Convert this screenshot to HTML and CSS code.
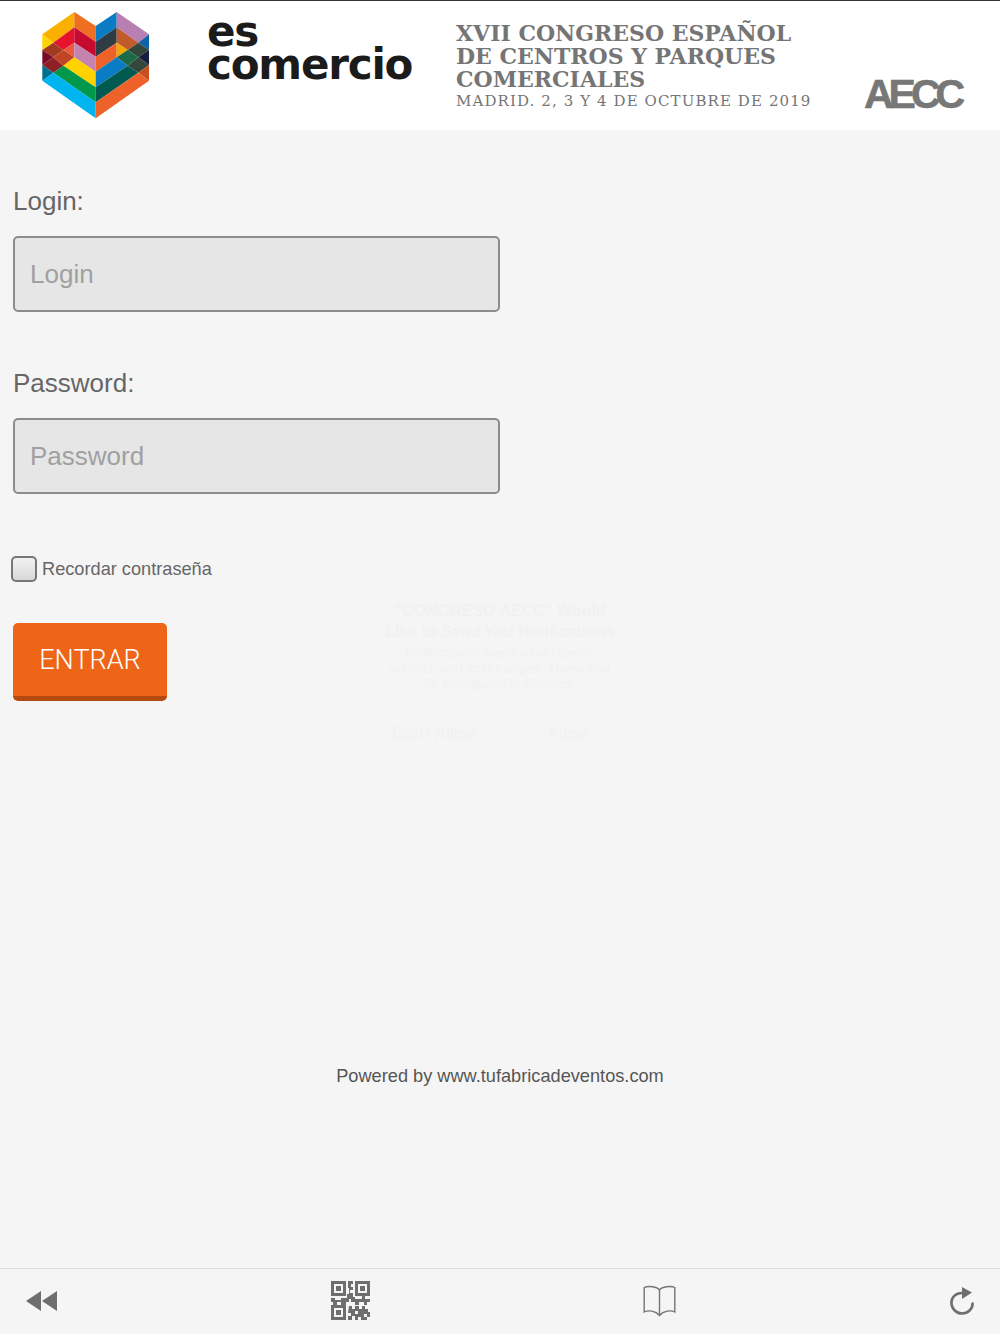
FILE: index.html
```html
<!DOCTYPE html>
<html lang="en">
<head>
  <meta charset="UTF-8" />
  <title>Congreso AECC</title>
  <link rel="stylesheet" href="styles.css">
</head>
<body>
  <header class="header">
    <svg class="logo" viewBox="0 0 420 390" width="140" height="130">
      <polygon fill="#fbb000" points="52,103 148,36 148,82 85,128"/>
      <polygon fill="#ffd400" points="52,103 85,128 52,150"/>
      <polygon fill="#ee6f20" points="148,36 212,78 212,125 148,82"/>
      <polygon fill="#e5142c" points="85,128 148,82 148,128 115,150"/>
      <polygon fill="#c70a30" points="148,82 212,125 212,170 148,128"/>
      <polygon fill="#a23a22" points="52,150 85,128 115,150 85,172"/>
      <polygon fill="#ea5a3c" points="115,150 148,128 148,172"/>
      <polygon fill="#7a0c28" points="52,150 85,172 52,195"/>
      <polygon fill="#8e2027" points="85,172 115,197 85,218 52,195"/>
      <polygon fill="#c04525" points="85,172 115,150 148,172 115,197"/>
      <polygon fill="#c583b0" points="148,128 212,170 212,215 148,172"/>
      <polygon fill="#ffd200" points="115,197 148,172 212,215 212,262"/>
      <polygon fill="#00984a" points="85,218 115,197 212,262 212,307"/>
      <polygon fill="#006f8f" points="52,195 85,218 52,242"/>
      <polygon fill="#00b5ef" points="52,242 85,218 212,307 212,355"/>
      <polygon fill="#0a7cc4" points="212,78 275,36 275,82 212,125"/>
      <polygon fill="#b77fb2" points="275,36 372,103 340,128 275,82"/>
      <polygon fill="#2f3c44" points="212,125 275,82 275,128 212,170"/>
      <polygon fill="#c25b2c" points="275,82 340,128 308,150 275,128"/>
      <polygon fill="#0e64a8" points="340,128 372,103 372,150"/>
      <polygon fill="#ee6229" points="212,170 275,128 275,172 212,215"/>
      <polygon fill="#f0a800" points="275,128 308,150 275,172"/>
      <polygon fill="#33483a" points="308,150 340,128 372,150 340,172"/>
      <polygon fill="#1c6a4a" points="275,172 308,150 340,172 308,197"/>
      <polygon fill="#16203e" points="340,172 372,150 372,195"/>
      <polygon fill="#0a7cc4" points="212,215 275,172 308,197 212,262"/>
      <polygon fill="#33483a" points="308,197 340,172 372,195 340,218"/>
      <polygon fill="#005a50" points="212,262 308,197 340,218 212,307"/>
      <polygon fill="#c84e20" points="340,218 372,195 372,242"/>
      <polygon fill="#ee6229" points="212,307 340,218 372,242 212,355"/>
    </svg>
    <div class="brand">es<br>comercio</div>
    <div class="event">
      <div class="event-title">XVII CONGRESO ESPAÑOL</div>
      <div class="event-title">DE CENTROS Y PARQUES</div>
      <div class="event-title">COMERCIALES</div>
      <div class="event-date">MADRID. 2, 3 Y 4 DE OCTUBRE DE 2019</div>
    </div>
    <div class="aecc">AECC</div>
  </header>

  <main class="content">
    <form class="login-form">
      <label class="field-label" for="login">Login:</label>
      <input class="field" type="text" id="login" placeholder="Login">
      <label class="field-label" for="password">Password:</label>
      <input class="field" type="password" id="password" placeholder="Password">
      <label class="remember"><span class="checkbox"></span>Recordar contraseña</label>
      <button class="enter" type="button">ENTRAR</button>
    </form>
    <div class="powered">Powered by www.tufabricadeventos.com</div>

    <div class="ghost-alert">
      <div class="ghost-title">“CONGRESO AECC” Would<br>Like to Send You Notifications</div>
      <div class="ghost-text">Notifications may include alerts,<br>sounds, and icon badges. These can<br>be configured in Settings.</div>
      <div class="ghost-actions"><span>Don't Allow</span><span>Allow</span></div>
    </div>
  </main>

  <footer class="toolbar">
    <svg viewBox="0 0 31 20" width="31" height="20">
      <path fill="#6e6e6e" d="M0 10 15 0V20ZM16 10 31 0V20Z"/>
    </svg>
    <svg viewBox="0 0 39 39" width="39" height="39" fill="#6e6e6e">
      <path fill-rule="evenodd" d="M0 0H15V15H0ZM3 3V12H12V3ZM24 0H39V15H24ZM27 3V12H36V3ZM0 24H15V39H0ZM3 27V36H12V27Z"/>
      <path d="M5 5H10V10H5ZM29 5H34V10H29ZM5 29H10V34H5Z"/>
      <path d="M17 0H22V3H20V6H22V9H19V12H22V16H24V18H31V15H34V18H39V21H36V24H33V21H28V24H24V21H20V18H18V21H15V24H10V21H6V24H2V21H0V17H4V19H10V17H16V13H18V7H17ZM18 25H21V28H24V25H28V28H31V25H34V28H37V31H39V36H36V33H33V36H36V39H30V36H27V39H24V35H21V39H17V35H20V32H17ZM24 30V33H27V30Z"/>
    </svg>
    <svg viewBox="0 0 33 32" width="33" height="32" fill="none" stroke="#757575" stroke-width="1.4">
      <path d="M16.500 5C14 1.500 5 .5 1.200 2.500V27C5 25 12.500 25.500 16.500 30.500C20.500 25.500 28 25 31.800 27V2.500C28 .5 19 1.500 16.500 5V30.500"/>
    </svg>
    <svg viewBox="0 0 24 28" width="24" height="28" fill="none">
      <path stroke="#6e6e6e" stroke-width="2.600" stroke-linecap="round" d="M12 6C5.500 6 1.400 10.500 1.400 15.500C1.400 21.500 6 26.500 12 26.500C18 26.500 22.600 22 22.600 16.500"/>
      <path fill="#6e6e6e" d="M12 0 22 5.500 12 12Z"/>
    </svg>
  </footer>
</body>
</html>
```

FILE: styles.css
```css
* {
  box-sizing: border-box;
}

body {
  margin: 0;
  height: 1334px;
  display: flex;
  flex-direction: column;
  background-color: #f5f5f5;
  font-family: "Liberation Sans", Arial, sans-serif;
  color: #666;
}

.header {
  height: 130px;
  display: flex;
  background-color: #fff;
  border-top: 1px solid #333;
}

.logo {
  margin-left: 25px;
  margin-top: -1px;
  flex-shrink: 0;
}

.brand {
  margin-left: 42px;
  padding-top: 14px;
  width: 249px;
  font-family: "DejaVu Sans", sans-serif;
  font-weight: bold;
  font-size: 42px;
  line-height: 33px;
  letter-spacing: -1.200px;
  color: #1b1b1b;
}

.event {
  padding-top: 21px;
  width: 408px;
  font-family: "DejaVu Serif", serif;
  color: #757575;
}

.event-title {
  font-size: 22px;
  line-height: 23px;
  font-weight: bold;
}

.event-date {
  font-size: 15px;
  line-height: 21px;
  letter-spacing: 1.100px;
  white-space: nowrap;
}

.aecc {
  padding-top: 68px;
  font-weight: bold;
  font-size: 41px;
  line-height: 50px;
  letter-spacing: -5px;
  color: #777;
  -webkit-text-stroke: .6px #777;
}

.content {
  position: relative;
  flex: 1;
  padding: 54px 13px 0;
}

.login-form {
  display: flex;
  flex-direction: column;
  align-items: flex-start;
}

.field-label {
  font-size: 26px;
  line-height: 34px;
  margin-bottom: 18px;
}

.field {
  width: 487px;
  height: 76px;
  margin-bottom: 54px;
  padding: 0 15px;
  font-family: inherit;
  font-size: 26px;
  background-color: #e6e6e6;
  border: 2px solid #8c8c8c;
  border-radius: 5px;
  outline: none;
}

.field::placeholder {
  color: #a0a0a0;
  opacity: 1;
}

.remember {
  display: flex;
  align-items: center;
  gap: 5px;
  margin-left: -2px;
  font-size: 18.200px;
  margin-top: 8px;
}

.checkbox {
  width: 26px;
  height: 26px;
  border: 2px solid #777;
  border-radius: 5px;
  background: linear-gradient(#f2f2f2, #d8d8d8);
}

.enter {
  width: 154px;
  height: 78px;
  margin-top: 41px;
  padding: 0;
  font-family: Roboto, sans-serif;
  font-weight: 300;
  font-size: 27px;
  color: #fff;
  background-color: #ee6518;
  border: none;
  border-bottom: 5px solid #b34a0f;
  border-radius: 5px;
}

.powered {
  margin-top: 364px;
  text-align: center;
  font-size: 18.200px;
  line-height: 22px;
  color: #555;
}

/* alert fading out behind the form */
.ghost-alert {
  position: absolute;
  left: 365px;
  top: 470px;
  width: 270px;
  text-align: center;
  color: #f1f1f1;
}

.ghost-title {
  font-size: 16px;
  line-height: 21px;
  font-weight: bold;
}

.ghost-text {
  font-size: 13.500px;
  line-height: 15.500px;
  margin-top: 3px;
}

.ghost-actions {
  display: flex;
  justify-content: space-between;
  padding: 0 47px 0 27px;
  margin-top: 32px;
  font-size: 17px;
}

.toolbar {
  height: 66px;
  flex-shrink: 0;
  display: flex;
  align-items: center;
  justify-content: space-between;
  padding: 0 26px 2px;
  border-top: 1px solid #dfdfdf;
}
```
